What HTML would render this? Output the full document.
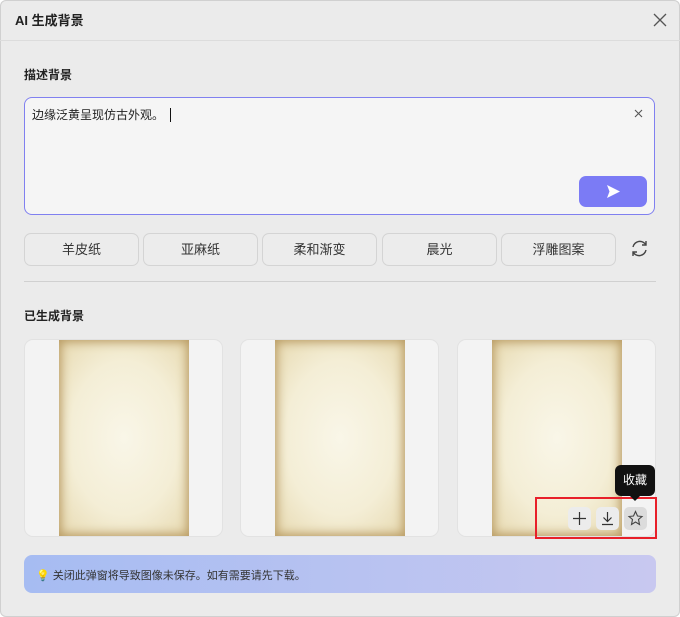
<!DOCTYPE html><html><head><meta charset="utf-8"><style>
body{margin:0;width:680px;height:617px;background:#fff;font-family:"Liberation Sans","Noto Sans CJK SC",sans-serif;overflow:hidden}
.dlg{position:absolute;left:0;top:0;width:680px;height:617px;background:#ebebeb;box-shadow:inset 0 0 0 1px #d0d0d0;border-radius:6px}
.abs{position:absolute}
.chip{position:absolute;top:233px;height:31px;width:113px;border:1px solid #d4d4d4;border-radius:7px;background:#ececec;font-size:13px;color:#333;text-align:center;line-height:31px}
.card{position:absolute;top:339px;width:197px;height:196px;background:#f3f3f3;border:1px solid #e2e2e2;border-radius:9px;overflow:hidden}
.img{position:absolute;left:34px;top:0;width:130px;height:196px;background:radial-gradient(ellipse 70% 65% at center,#f9f6e8 0%,#f4eed6 60%,#e8dbb4 100%);box-shadow:inset 0 0 10px 2px #b89a62}
.btn{position:absolute;top:507px;width:23px;height:23px;border-radius:5px;background:#ececec}
</style></head><body><div class="dlg">
<div class="abs" style="left:15px;top:10px;font-size:13px;font-weight:bold;color:#222">AI 生成背景</div>
<svg class="abs" style="left:653px;top:13px" width="14" height="14"><path d="M1 1L13 13M13 1L1 13" stroke="#555" stroke-width="1.3"/></svg>
<div class="abs" style="left:0;top:40px;width:680px;height:1px;background:#dcdcdc"></div>
<div class="abs" style="left:24px;top:66px;font-size:12px;font-weight:bold;color:#222">描述背景</div>
<div class="abs" style="left:24px;top:97px;width:629px;height:116px;border:1.5px solid #8080f0;border-radius:8px;background:#f5f5f5"></div>
<div class="abs" style="left:32px;top:106px;font-size:12px;color:#222">边缘泛黄呈现仿古外观。<span style="border-left:1px solid #111;margin-left:6px"> </span></div>
<svg class="abs" style="left:634px;top:109px" width="9" height="9"><path d="M1 1L8 8M8 1L1 8" stroke="#555" stroke-width="1.1"/></svg>
<div class="abs" style="left:579px;top:176px;width:68px;height:31px;border-radius:7px;background:#7b7bf5"></div>
<svg class="abs" style="left:606px;top:184px" width="15" height="15"><path d="M1 1L14 7.5L1 14L3.5 7.5Z" fill="#fff"/></svg>
<div class="chip" style="left:24px">羊皮纸</div><div class="chip" style="left:143px">亚麻纸</div><div class="chip" style="left:262px">柔和渐变</div><div class="chip" style="left:382px">晨光</div><div class="chip" style="left:501px">浮雕图案</div>
<svg class="abs" style="left:630px;top:239px" width="19" height="19" fill="none" stroke="#444" stroke-width="1.4"><path d="M3 8A7 7 0 0 1 16 6M16 2V6H12M16 11A7 7 0 0 1 3 13M3 17V13H7"/></svg>
<div class="abs" style="left:24px;top:281px;width:632px;height:1px;background:#d0d0d0"></div>
<div class="abs" style="left:24px;top:307px;font-size:12px;font-weight:bold;color:#222">已生成背景</div>
<div class="card" style="left:24px"><div class="img"></div></div>
<div class="card" style="left:240px"><div class="img"></div></div>
<div class="card" style="left:457px"><div class="img"></div></div>
<div class="abs" style="left:535px;top:497px;width:118px;height:38px;border:2px solid #e8202a"></div>
<div class="btn" style="left:568px"><svg width="23" height="23"><path d="M11.5 5V18M5 11.5H18" stroke="#333" stroke-width="1.2"/></svg></div>
<div class="btn" style="left:596px"><svg width="23" height="23" fill="none" stroke="#333" stroke-width="1.2"><path d="M11.5 5V14M7.5 10.5L11.5 14.5L15.5 10.5M6 17.5H17"/></svg></div>
<div class="btn" style="left:624px;background:#dcdcdc"><svg width="23" height="23"><path d="M11.5 4.5L13.5 9L18 9.5L14.5 12.5L15.5 17.5L11.5 15L7.5 17.5L8.5 12.5L5 9.5L9.5 9Z" fill="none" stroke="#444" stroke-width="1.1"/></svg></div>
<div class="abs" style="left:615px;top:465px;width:40px;height:31px;background:#111;border-radius:6px;color:#fff;font-size:12px;text-align:center;line-height:31px">收藏</div>
<div class="abs" style="left:630px;top:496px;width:0;height:0;border:5px solid transparent;border-top-color:#111"></div>
<div class="abs" style="left:24px;top:555px;width:632px;height:38px;border-radius:8px;background:linear-gradient(90deg,#a6bcf2,#c8c8f0)"></div>
<div class="abs" style="left:36px;top:567px;font-size:11px;color:#333">💡 关闭此弹窗将导致图像未保存。如有需要请先下载。</div>
</div></body></html>
